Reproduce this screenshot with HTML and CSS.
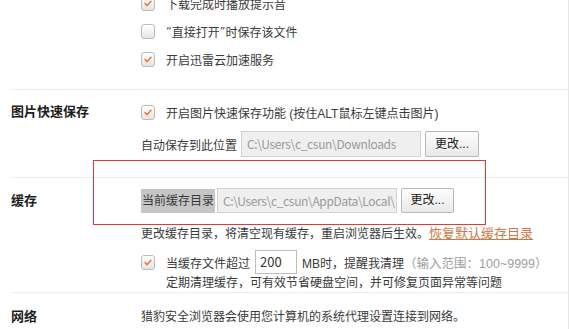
FILE: index.html
```html
<!DOCTYPE html>
<html>
    <head>
        <meta charset="utf-8">
        <title>设置 - 下载与缓存</title>
        <link rel="stylesheet" href="styles.css">
    </head>
    <body>
        <div class="page">
            <div class="group top">
                <div class="label"></div>
                <div class="body">
                    <div class="row"><span class="cb on"><svg viewBox="0 0 14 15"><path d="M3.5 7.6 L6 10 L10.5 4.8"/></svg></span>下载完成时播放提示音</div>
                    <div class="row"><span class="cb"></span><span class="q">“</span>直接打开<span class="q">”</span>时保存该文件</div>
                    <div class="row"><span class="cb on"><svg viewBox="0 0 14 15"><path d="M3.5 7.6 L6 10 L10.5 4.8"/></svg></span>开启迅雷云加速服务</div>
                </div>
            </div>

            <div class="group pics">
                <div class="label">图片快速保存</div>
                <div class="body">
                    <div class="row"><span class="cb on"><svg viewBox="0 0 14 15"><path d="M3.5 7.6 L6 10 L10.5 4.8"/></svg></span>开启图片快速保存功能 (按住ALT鼠标左键点击图片)</div>
                    <div class="path-row">
                        <span class="plain">自动保存到此位置</span>
                        <span class="path">C:\Users\c_csun\Downloads</span>
                        <span class="btn">更改...</span>
                    </div>
                </div>
            </div>

            <div class="group cache">
                <div class="label">缓存</div>
                <div class="body">
                    <div class="path-row">
                        <span class="plain marked">当前缓存目录</span>
                        <span class="path tight">C:\Users\c_csun\AppData\Local\</span>
                        <span class="btn">更改...</span>
                    </div>
                    <div class="note">更改缓存目录，将清空现有缓存，重启浏览器后生效。<a class="link" href="#">恢复默认缓存目录</a></div>
                    <div class="row limit"><span class="cb on"><svg viewBox="0 0 14 15"><path d="M3.5 7.6 L6 10 L10.5 4.8"/></svg></span>当缓存文件超过<span class="num">200</span>MB时，提醒我清理<span class="hint">（输入范围：100~9999）</span></div>
                    <div class="sub">定期清理缓存，可有效节省硬盘空间，并可修复页面异常等问题</div>
                </div>
            </div>

            <div class="group net">
                <div class="label">网络</div>
                <div class="body">
                    <div class="plain-line">猎豹安全浏览器会使用您计算机的系统代理设置连接到网络。</div>
                </div>
            </div>

            <div class="annot"></div>
        </div>
    </body>
</html>
```

FILE: styles.css
```css
*{box-sizing:border-box;}
html,body{
    margin:0;
    height:100%;
    overflow:hidden;
    background:#fff;
    font-family:"Liberation Sans","Noto Sans CJK SC",sans-serif;
    font-size:12px;
    color:#3a3a3a;
}
.page{position:relative; display:flow-root; width:569px; height:100%; padding-left:11px; border-right:1px solid #e6e6e6;}
.group{display:flex; border-top:1px solid #ebebeb;}
.group.top{border-top:none; margin-top:-11px; padding-bottom:16px;}
.label{width:130px; flex:none; font-weight:bold; font-size:13px; color:#1e1e1e;}
.body{flex:1;}

.row{display:flex; align-items:center; height:28px; white-space:nowrap;}
.cb{width:14px; height:15px; flex:none; margin-right:11px; border:1px solid #bcbcbc; border-radius:3px; background:linear-gradient(#fff,#e4e4e4);}
.cb svg{display:block; width:12px; height:13px;}
.cb svg path{fill:none; stroke:#e8742a; stroke-width:1.7; stroke-linecap:round; stroke-linejoin:round;}
.q{font-family:"DejaVu Sans",sans-serif; font-size:11px;}

.pics{padding-top:8px; padding-bottom:20px;}
.pics .label{line-height:28px;}
.path-row{display:flex; align-items:center; margin-top:5px; height:26px; white-space:nowrap;}
.plain{margin-right:4px;}
.path{width:180px; height:26px; line-height:24px; padding-left:5px; border:1px solid #d2d2d2; background:#efefef; color:#9a9a9a; font-family:"Noto Sans CJK SC",sans-serif; font-size:12px; letter-spacing:-0.35px; overflow:hidden; white-space:nowrap;}
.btn{width:54px; height:26px; line-height:24px; margin-left:4px; text-align:center; border:1px solid #b8b8b8; border-radius:2px; background:linear-gradient(#fdfdfd,#e9e9e9); color:#222;}

.cache{padding-top:10px;}
.cache .label{line-height:25px;}
.cache .path-row{margin-top:0; height:25px;}
.marked{background:#c6c6c6; height:24px; line-height:24px; padding:0 1px; margin-right:2px;}
.path.tight{height:25px; line-height:23px;}
.cache .btn{width:53px; height:25px; line-height:23px;}
.note{margin-top:11px; line-height:20px; white-space:nowrap;}
.link{color:#c97a4a; font-size:13px; text-decoration:underline;}
.limit{margin-top:6px; height:24px;}
.num{width:42px; height:24px; line-height:22px; margin:0 5px; padding-left:4px; border:1px solid #bdbdbd; background:#fff; font-family:"Noto Sans CJK SC",sans-serif; font-size:13px; color:#333;}
.hint{color:#a0a0a0; font-size:12.5px;}
.sub{padding-left:25px; line-height:18px; white-space:nowrap;}

.net{padding-top:14px;}
.net .label{line-height:20px;}
.plain-line{line-height:20px;}

.annot{position:absolute; left:93px; top:160px; width:393px; height:65px; border:1px solid #e53935;}
```
